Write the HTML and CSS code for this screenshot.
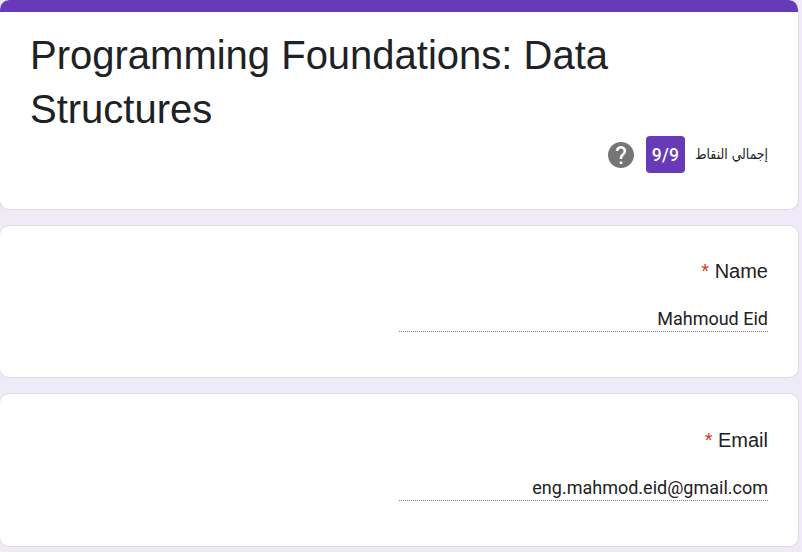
FILE: index.html
```html
<!DOCTYPE html>
<html lang="ar" dir="rtl">
<head>
<meta charset="utf-8">
<title>Programming Foundations: Data Structures</title>
<link rel="stylesheet" href="styles.css">
</head>
<body>
<main class="form">
  <header class="card card-head">
    <h1 class="title" dir="ltr">Programming Foundations: Data Structures</h1>
    <div class="score">
      <span class="score-label">إجمالي النقاط</span>
      <span class="score-value" dir="ltr">9/9</span>
      <svg class="help" viewBox="2 2 20 20" aria-hidden="true"><path fill="#757575" d="M12 2C6.48 2 2 6.48 2 12s4.48 10 10 10 10-4.48 10-10S17.52 2 12 2zm1 17h-2v-2h2v2zm2.07-7.75l-.9.92C13.45 12.9 13 13.5 13 15h-2v-.5c0-1.1.45-2.1 1.17-2.83l1.24-1.26c.37-.36.59-.86.59-1.41 0-1.1-.9-2-2-2s-2 .9-2 2H8c0-2.21 1.79-4 4-4s4 1.79 4 4c0 .88-.36 1.68-.93 2.25z"/></svg>
    </div>
  </header>
  <section class="card question">
    <div class="label"><span dir="ltr">Name</span> <span class="required">*</span></div>
    <div class="answer"><span dir="ltr">Mahmoud Eid</span></div>
  </section>
  <section class="card question question-email">
    <div class="label"><span dir="ltr">Email</span> <span class="required">*</span></div>
    <div class="answer"><span dir="ltr">eng.mahmod.eid@gmail.com</span></div>
  </section>
</main>
</body>
</html>
```

FILE: styles.css
```css
* { box-sizing: border-box; }
body {
  margin: 0;
  height: 552px;
  overflow: hidden;
  background: #eeeaf8;
  color: #202124;
  font-family: "Liberation Sans", Arial, sans-serif;
}
.form {
  display: flex;
  flex-direction: column;
  gap: 15px;
  margin-right: 3px;
  margin-left: -1px;
}
.card {
  background: #fff;
  border: 1px solid #dadce0;
  border-radius: 10px;
  padding: 0 30px;
}
.card-head {
  height: 210px;
  border-top: 0;
  padding-top: 28px;
  background: linear-gradient(#673ab7 12px, #fff 12px) border-box;
}
.title {
  margin: 0;
  font-size: 40px;
  font-weight: 400;
  line-height: 54px;
}
.score {
  display: flex;
  align-items: center;
  height: 37px;
}
.score-label {
  width: 73px;
  font-family: "DejaVu Sans", sans-serif;
  font-size: 14px;
  line-height: 20px;
  white-space: nowrap;
  transform: translateY(-1px) scaleX(.89);
  transform-origin: right center;
}
.score-value {
  margin: 0 10px 0 12px;
  width: 39px;
  height: 37px;
  border-radius: 4px;
  background: #673ab7;
  color: #fff;
  font: 500 17.5px/38px Roboto, sans-serif;
  letter-spacing: .3px;
  text-align: center;
}
.help { width: 26px; height: 26px; }
.question { height: 153px; padding-top: 30px; }
.question-email { height: 154px; padding-top: 31px; }
.label { font-size: 20px; line-height: 30px; }
.required { color: #d93025; }
.answer {
  width: 369px;
  height: 46px;
  padding-top: 19px;
  border-bottom: 1px dotted #80808a;
  font: 400 18px/28px Roboto, sans-serif;
}
```
